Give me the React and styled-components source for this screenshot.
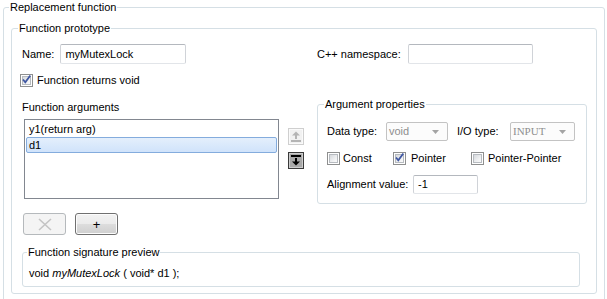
import React from "react";
import styled, { createGlobalStyle } from "styled-components";

const GlobalStyle = createGlobalStyle`
  * { box-sizing: border-box; }
  html, body {
    margin: 0;
    padding: 0;
    height: 299px;
    overflow: hidden;
    background: #fff;
  }
  body {
    font-family: "Liberation Sans", Arial, sans-serif;
    font-size: 11px;
    color: #000;
  }
`;

const Group = styled.fieldset`
  margin: ${(p) => p.$margin || "0"};
  padding: ${(p) => p.$pad || "0"};
  width: ${(p) => p.$width || "auto"};
  height: ${(p) => p.$height || "auto"};
  border: 1px solid #d5dfe5;
  border-radius: 3px;
  min-width: 0;
`;

const Title = styled.legend`
  padding: 0 1px;
  margin-left: ${(p) => p.$offset || 0}px;
  line-height: 13px;
  font-size: 11px;
`;

const Row = styled.div`
  display: flex;
  align-items: center;
  height: ${(p) => p.$h || 20}px;
  margin-top: ${(p) => p.$mt || 0}px;
  margin-left: ${(p) => p.$ml || 0}px;
`;

const Cell = styled.div`
  display: flex;
  align-items: center;
  width: ${(p) => (p.$w ? `${p.$w}px` : "auto")};
  margin-left: ${(p) => p.$ml || 0}px;
  flex-shrink: 0;
`;

const Label = styled.span`
  line-height: 13px;
  white-space: nowrap;
`;

const TextBox = styled.div`
  width: ${(p) => p.$w}px;
  height: ${(p) => p.$h || 20}px;
  margin-left: ${(p) => p.$ml || 0}px;
  border: 1px solid #e2e5e9;
  border-top-color: #b4b8be;
  border-left-color: #d0d3d8;
  border-right-color: #d0d3d8;
  border-radius: 2px;
  background: #fff;
  padding: 0 4px;
  display: flex;
  align-items: center;
  line-height: 13px;
`;

const Combo = styled.div`
  position: relative;
  width: ${(p) => p.$w}px;
  height: 19px;
  border: 1px solid #c3c3c3;
  border-radius: 2px;
  background: #fcfcfc;
  color: #8e8e8e;
  padding-left: 2px;
  display: flex;
  align-items: center;
  line-height: 13px;
  font-family: ${(p) => (p.$serif ? '"Liberation Serif", serif' : "inherit")};
`;

const ComboArrow = styled.svg`
  position: absolute;
  right: 8px;
  top: 7px;
`;

const BoxOuter = styled.span`
  width: 13px;
  height: 13px;
  border: 1px solid #8e8f8f;
  background: #fff;
  padding: 1px;
  display: inline-flex;
  flex-shrink: 0;
`;

const BoxInner = styled.span`
  position: relative;
  flex: 1;
  border: 1px solid #b7bbc0;
  background: linear-gradient(135deg, #d6d9dd 0%, #f2f3f4 70%, #fafafa 100%);
`;

const CheckMark = styled.svg`
  position: absolute;
  left: -2px;
  top: -3px;
`;

const CheckText = styled.span`
  margin-left: ${(p) => p.$gap || 4}px;
  line-height: 13px;
  white-space: nowrap;
`;

function CheckBox({ checked, label, gap }) {
  return (
    <>
      <BoxOuter>
        <BoxInner>
          {checked && (
            <CheckMark width="11" height="11" viewBox="0 0 11 11">
              <path
                d="M2 5.5 L4.3 8.3 L9.3 1.5"
                fill="none"
                stroke="#3f57a2"
                strokeWidth="1.8"
              />
            </CheckMark>
          )}
        </BoxInner>
      </BoxOuter>
      <CheckText $gap={gap}>{label}</CheckText>
    </>
  );
}

const Middle = styled.div`
  display: flex;
  align-items: flex-start;
  margin-top: 11px;
`;

const LeftCol = styled.div`
  width: 257px;
  padding-top: 3px;
  flex-shrink: 0;
`;

const List = styled.div`
  margin: 5px 0 0 2px;
  width: 255px;
  height: 80px;
  border: 1px solid #828790;
  background: #fff;
  padding: 1px;
`;

const ListItem = styled.div`
  height: 16px;
  line-height: 14px;
  padding-left: 2px;
  border: 1px solid ${(p) => (p.$selected ? "#84acdd" : "transparent")};
  border-radius: 2px;
  background: ${(p) =>
    p.$selected ? "linear-gradient(#e4effc, #d0e3fb)" : "transparent"};
`;

const ButtonRow = styled.div`
  display: flex;
  gap: 9px;
  margin: 14px 0 0 1px;
`;

const PushButton = styled.div`
  width: 43px;
  height: 22px;
  border: 1px solid ${(p) => (p.$disabled ? "#b5b9bc" : "#707070")};
  border-radius: 3px;
  background: ${(p) =>
    p.$disabled
      ? "#f4f4f4"
      : "linear-gradient(#f2f2f2 0%, #ebebeb 50%, #dddddd 51%, #cfcfcf 100%)"};
  box-shadow: inset 0 0 0 1px ${(p) => (p.$disabled ? "#f4f4f4" : "#fcfcfc")};
  display: flex;
  align-items: center;
  justify-content: center;
  font-size: 13px;
  line-height: 13px;
`;

const ArrowCol = styled.div`
  display: flex;
  flex-direction: column;
  gap: 7px;
  margin-left: 9px;
  padding-top: 30px;
`;

const ArrowButton = styled.div`
  width: 16px;
  height: 17px;
  border: 1px solid ${(p) => (p.$disabled ? "#cfcfcf" : "#3a3a3a")};
  background: ${(p) => (p.$disabled ? "#f1f1f1" : "#a8a8a8")};
  box-shadow: inset 0 0 0 1px ${(p) => (p.$disabled ? "#fafafa" : "#cdcdcd")};
  display: flex;
  align-items: center;
  justify-content: center;
`;

const Props = styled(Group)`
  margin-left: 13px;
  width: 270px;
  flex-shrink: 0;
`;

const Signature = styled.div`
  line-height: 13px;
  white-space: pre;
`;

const Ital = styled.i`
  font-style: italic;
`;

function Arrow({ down }) {
  const color = down ? "#000" : "#b4b4b4";
  return down ? (
    <svg width="10" height="11" viewBox="0 0 10 11">
      <rect x="0" y="0" width="10" height="2" fill={color} />
      <rect x="4" y="3" width="2" height="4" fill={color} />
      <path d="M1 6.5 L9 6.5 L5 10.5 Z" fill={color} />
    </svg>
  ) : (
    <svg width="10" height="11" viewBox="0 0 10 11">
      <path d="M1 4.5 L9 4.5 L5 0.5 Z" fill={color} />
      <rect x="4" y="4" width="2" height="4" fill={color} />
      <rect x="0" y="9" width="10" height="2" fill={color} />
    </svg>
  );
}

function DropArrow() {
  return (
    <ComboArrow width="7" height="4" viewBox="0 0 7 4">
      <path d="M0 0 L7 0 L3.5 4 Z" fill="#a4a4a4" />
    </ComboArrow>
  );
}

export default function App() {
  return (
    <>
      <GlobalStyle />
      <Group $margin="1px 0 0 3px" $pad="8px 7px 0 7px" $width="602px" $height="320px">
        <Title $offset={-2}>Replacement function</Title>
        <Group $pad="9px 8px 6px 10px">
          <Title $offset={-4}>Function prototype</Title>

          <Row>
            <Cell $w={295}>
              <Label>Name:</Label>
              <TextBox $w={126} $ml={6}>myMutexLock</TextBox>
            </Cell>
            <Cell>
              <Label>C++ namespace:</Label>
              <TextBox $w={125} $ml={7} />
            </Cell>
          </Row>

          <Row $h={13} $mt={10} $ml={-2}>
            <CheckBox checked label="Function returns void" />
          </Row>

          <Middle>
            <LeftCol>
              <Label>Function arguments</Label>
              <List>
                <ListItem>y1(return arg)</ListItem>
                <ListItem $selected>d1</ListItem>
              </List>
              <ButtonRow>
                <PushButton $disabled>
                  <svg width="16" height="13" viewBox="0 0 16 13">
                    <path
                      d="M2 1 L14 12 M14 1 L2 12"
                      stroke="#c4c4c4"
                      strokeWidth="1.6"
                    />
                  </svg>
                </PushButton>
                <PushButton>+</PushButton>
              </ButtonRow>
            </LeftCol>

            <ArrowCol>
              <ArrowButton $disabled>
                <Arrow />
              </ArrowButton>
              <ArrowButton>
                <Arrow down />
              </ArrowButton>
            </ArrowCol>

            <Props $pad="11px 8px 9px 9px">
              <Title $offset={-3}>Argument properties</Title>
              <Row $h={19}>
                <Cell $w={59}>
                  <Label>Data type:</Label>
                </Cell>
                <Combo $w={62}>
                  void
                  <DropArrow />
                </Combo>
                <Cell $w={53} $ml={9}>
                  <Label>I/O type:</Label>
                </Cell>
                <Combo $w={65} $serif>
                  INPUT
                  <DropArrow />
                </Combo>
              </Row>
              <Row $h={13} $mt={11}>
                <Cell $w={66}>
                  <CheckBox label="Const" gap={3} />
                </Cell>
                <Cell $w={78}>
                  <CheckBox checked label="Pointer" gap={5} />
                </Cell>
                <Cell>
                  <CheckBox label="Pointer-Pointer" gap={4} />
                </Cell>
              </Row>
              <Row $h={19} $mt={10}>
                <Cell $w={86}>
                  <Label>Alignment value:</Label>
                </Cell>
                <TextBox $w={65} $h={19}>-1</TextBox>
              </Row>
            </Props>
          </Middle>

          <Group $margin="11px 8px 0 0" $pad="8px 6px 6px 6px">
            <Title $offset={-2}>Function signature preview</Title>
            <Signature>
              void <Ital>myMutexLock</Ital> ( void* d1 );
            </Signature>
          </Group>
        </Group>
      </Group>
    </>
  );
}
